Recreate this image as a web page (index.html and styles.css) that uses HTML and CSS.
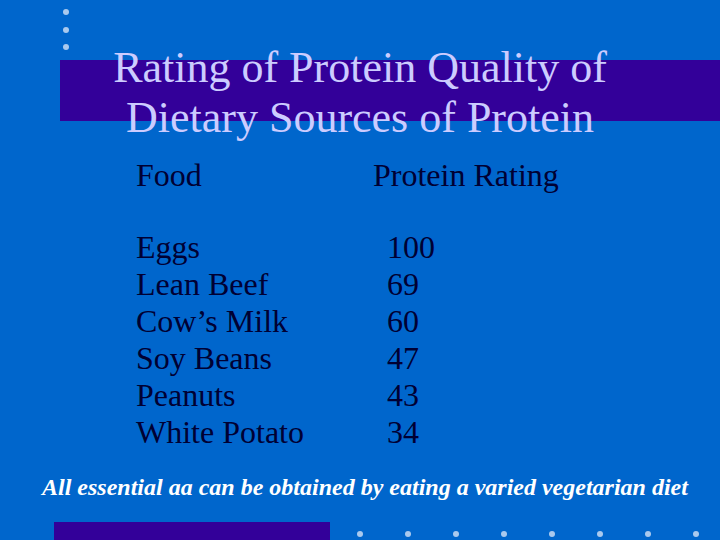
FILE: index.html
```html
<!DOCTYPE html>
<html>
<head>
<meta charset="utf-8">
<link rel="stylesheet" href="styles.css">
</head>
<body>
<div class="slide">
  <header class="head">
    <div class="vdots"><span class="dot"></span><span class="dot"></span><span class="dot"></span></div>
    <div class="bar"></div>
    <h1 class="title">Rating of Protein Quality of<br>Dietary Sources of Protein</h1>
  </header>
  <div class="table">
    <div class="cell hdr">Food</div>
    <div class="cell hdr">Protein Rating</div>
    <div class="cell">Eggs</div><div class="cell num">100</div>
    <div class="cell">Lean Beef</div><div class="cell num">69</div>
    <div class="cell">Cow’s Milk</div><div class="cell num">60</div>
    <div class="cell">Soy Beans</div><div class="cell num">47</div>
    <div class="cell">Peanuts</div><div class="cell num">43</div>
    <div class="cell">White Potato</div><div class="cell num">34</div>
  </div>
  <p class="note">All essential aa can be obtained by eating a varied vegetarian diet</p>
  <footer class="foot">
    <div class="fbar"></div>
    <div class="hdots">
      <span class="dot"></span><span class="dot"></span><span class="dot"></span><span class="dot"></span>
      <span class="dot"></span><span class="dot"></span><span class="dot"></span><span class="dot"></span>
    </div>
  </footer>
</div>
</body>
</html>
```
FILE: styles.css
```css
html, body {
  margin: 0;
  padding: 0;
  background: #0066cc;
}
.slide {
  width: 720px;
  height: 540px;
  overflow: hidden;
  background: #0066cc;
  display: flex;
  flex-direction: column;
  font-family: "Liberation Serif", "Times New Roman", serif;
}
.head {
  display: grid;
  height: 150px;
}
.head > * {
  grid-area: 1 / 1;
}
.vdots {
  display: flex;
  flex-direction: column;
  gap: 11.5px;
  margin: 9px 0 0 63px;
  align-self: start;
  justify-self: start;
}
.dot {
  display: block;
  width: 6px;
  height: 6px;
  border-radius: 50%;
  background: #a9c9ee;
}
.bar {
  margin: 60px 0 0 60px;
  height: 61px;
  background: #330099;
  align-self: start;
}
.title {
  margin: 0;
  padding-top: 43px;
  font-weight: normal;
  font-size: 44px;
  line-height: 50px;
  color: #ccccff;
  text-align: center;
  align-self: start;
}
.table {
  display: grid;
  grid-template-columns: 237px auto;
  padding: 6.7px 0 0 136px;
  font-size: 32px;
  line-height: 37px;
  color: #000033;
}
.hdr {
  margin-bottom: 35px;
}
.num {
  padding-left: 14px;
}
.note {
  margin: 22.3px 0 0 42px;
  font-size: 24px;
  line-height: 28px;
  font-weight: bold;
  font-style: italic;
  color: #ffffff;
  white-space: nowrap;
}
.foot {
  margin-top: auto;
  display: flex;
  align-items: flex-start;
  height: 18px;
}
.fbar {
  margin-left: 54px;
  width: 276px;
  height: 18px;
  background: #330099;
}
.hdots {
  display: flex;
  gap: 42px;
  margin: 9px 0 0 27px;
}
```
